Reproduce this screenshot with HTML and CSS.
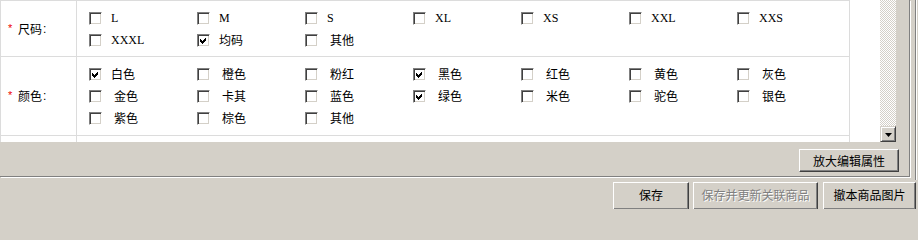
FILE: index.html
```html
<!DOCTYPE html>
<html>
<head>
<meta charset="utf-8">
<link rel="stylesheet" href="styles.css">
</head>
<body>
<div class="window">
  <div class="top">
    <div class="group">
      <div class="scroll">
        <div class="view">
          <div class="table">
            <div class="row r1">
              <div class="label"><span class="req">*</span><span class="lt">尺码</span><span class="colon">:</span></div>
              <div class="opts">
                <label class="opt lat"><span class="cb"></span><span class="tx">L</span></label>
                <label class="opt lat"><span class="cb"></span><span class="tx">M</span></label>
                <label class="opt lat"><span class="cb"></span><span class="tx">S</span></label>
                <label class="opt lat"><span class="cb"></span><span class="tx">XL</span></label>
                <label class="opt lat"><span class="cb"></span><span class="tx">XS</span></label>
                <label class="opt lat"><span class="cb"></span><span class="tx">XXL</span></label>
                <label class="opt lat"><span class="cb"></span><span class="tx">XXS</span></label>
                <label class="opt lat"><span class="cb"></span><span class="tx">XXXL</span></label>
                <label class="opt"><span class="cb on"><svg viewBox="0 0 9 9" width="9" height="9"><polygon points="1,3 3,5 7,1 7,4 3,8 1,6" fill="#000"/></svg></span><span class="tx">均码</span></label>
                <label class="opt sp"><span class="cb"></span><span class="tx">其他</span></label>
              </div>
            </div>
            <div class="row r2">
              <div class="label"><span class="req">*</span><span class="lt">颜色</span><span class="colon">:</span></div>
              <div class="opts">
                <label class="opt"><span class="cb on"><svg viewBox="0 0 9 9" width="9" height="9"><polygon points="1,3 3,5 7,1 7,4 3,8 1,6" fill="#000"/></svg></span><span class="tx">白色</span></label>
                <label class="opt sp"><span class="cb"></span><span class="tx">橙色</span></label>
                <label class="opt sp"><span class="cb"></span><span class="tx">粉红</span></label>
                <label class="opt sp"><span class="cb on"><svg viewBox="0 0 9 9" width="9" height="9"><polygon points="1,3 3,5 7,1 7,4 3,8 1,6" fill="#000"/></svg></span><span class="tx">黑色</span></label>
                <label class="opt sp"><span class="cb"></span><span class="tx">红色</span></label>
                <label class="opt sp"><span class="cb"></span><span class="tx">黄色</span></label>
                <label class="opt sp"><span class="cb"></span><span class="tx">灰色</span></label>
                <label class="opt sp"><span class="cb"></span><span class="tx">金色</span></label>
                <label class="opt sp"><span class="cb"></span><span class="tx">卡其</span></label>
                <label class="opt sp"><span class="cb"></span><span class="tx">蓝色</span></label>
                <label class="opt sp"><span class="cb on"><svg viewBox="0 0 9 9" width="9" height="9"><polygon points="1,3 3,5 7,1 7,4 3,8 1,6" fill="#000"/></svg></span><span class="tx">绿色</span></label>
                <label class="opt sp"><span class="cb"></span><span class="tx">米色</span></label>
                <label class="opt sp"><span class="cb"></span><span class="tx">驼色</span></label>
                <label class="opt sp"><span class="cb"></span><span class="tx">银色</span></label>
                <label class="opt sp"><span class="cb"></span><span class="tx">紫色</span></label>
                <label class="opt sp"><span class="cb"></span><span class="tx">棕色</span></label>
                <label class="opt sp"><span class="cb"></span><span class="tx">其他</span></label>
              </div>
            </div>
            <div class="row r3">
              <div class="label"></div>
              <div class="opts"></div>
            </div>
          </div>
        </div>
        <div class="scrollbar">
          <div class="track"></div>
          <div class="sbtn"><svg viewBox="0 0 7 4" width="7" height="4"><polygon points="0,0 7,0 3.5,4" fill="#000"/></svg></div>
        </div>
      </div>
      <div class="group-actions">
        <button class="btn zoom-btn">放大编辑属性</button>
      </div>
    </div>
    <div class="edge"></div>
  </div>
  <div class="bottom">
    <button class="btn b-save">保存</button>
    <button class="btn b-update" disabled>保存并更新关联商品</button>
    <button class="btn b-move">撤本商品图片</button>
  </div>
</div>
</body>
</html>
```

FILE: styles.css
```css
html, body {
  margin: 0;
  padding: 0;
}
body {
  background: #d4d0c8;
  width: 918px;
  height: 209px;
  overflow: hidden;
  font-family: "Noto Sans CJK SC", "Liberation Sans", sans-serif;
  font-size: 12px;
  color: #000;
}
.window {
  display: flex;
  flex-direction: column;
  width: 918px;
}
.top {
  display: flex;
  height: 180px;
}
.group {
  box-sizing: border-box;
  width: 910px;
  height: 177px;
  border-right: 1px solid #808080;
  border-bottom: 1px solid #808080;
  box-shadow: 1px 1px 0 #fff;
  display: flex;
  flex-direction: column;
}
.edge {
  margin-left: 5px;
  width: 1px;
  height: 180px;
  background: #808080;
  box-shadow: 1px 0 0 #fff;
}
.scroll {
  display: flex;
  width: 896px;
  height: 142px;
}
.view {
  width: 880px;
  height: 142px;
  background: #fff;
  overflow: hidden;
}
.table {
  box-sizing: border-box;
  width: 850px;
  border-left: 1px solid #dcdcdc;
  border-top: 1px solid #dcdcdc;
}
.row {
  display: flex;
  border-bottom: 1px solid #dcdcdc;
}
.label {
  box-sizing: border-box;
  width: 76px;
  border-right: 1px solid #dcdcdc;
  padding-left: 7px;
  display: flex;
  align-items: center;
  line-height: 16px;
}
.req {
  font-family: "Liberation Sans", sans-serif;
  color: #e00;
  font-size: 11px;
  width: 10px;
  position: relative;
  top: -1px;
}
.lt {
  letter-spacing: 0;
}
.colon {
  font-family: "Liberation Sans", sans-serif;
  margin-left: 1px;
}
.opts {
  flex: 1;
  border-right: 1px solid #dcdcdc;
  display: flex;
  flex-wrap: wrap;
  align-content: flex-start;
  padding-left: 12px;
}
.r1 .opts {
  padding-top: 6px;
  padding-bottom: 5px;
}
.r2 .opts {
  padding-top: 6px;
  padding-bottom: 6px;
}
.r3 .opts {
  height: 30px;
}
.opt {
  width: 108px;
  height: 22px;
  display: flex;
  align-items: center;
  line-height: 22px;
  white-space: nowrap;
}
.cb {
  box-sizing: border-box;
  width: 13px;
  height: 13px;
  flex: none;
  background: #fff;
  border-top: 1px solid #808080;
  border-left: 1px solid #808080;
  border-bottom: 1px solid #fff;
  border-right: 1px solid #fff;
  box-shadow: inset 1px 1px 0 #404040, inset -1px -1px 0 #d4d0c8;
  display: flex;
  align-items: center;
  justify-content: center;
}
.cb svg {
  display: block;
  shape-rendering: crispEdges;
}
.tx {
  margin-left: 9px;
}
.sp .tx {
  margin-left: 12px;
}
.lat .tx {
  font-family: "Liberation Serif", serif;
  font-size: 12px;
}
.scrollbar {
  width: 16px;
  height: 142px;
  display: flex;
  flex-direction: column;
}
.track {
  flex: 1;
  background-image: conic-gradient(#fff 25%, #d4d0c8 0 50%, #fff 0 75%, #d4d0c8 0);
  background-size: 2px 2px;
}
.sbtn {
  box-sizing: border-box;
  width: 16px;
  height: 16px;
  background: #d4d0c8;
  border-top: 1px solid #d4d0c8;
  border-left: 1px solid #d4d0c8;
  border-right: 1px solid #404040;
  border-bottom: 1px solid #404040;
  box-shadow: inset 1px 1px 0 #fff, inset -1px -1px 0 #808080;
  display: flex;
  align-items: center;
  justify-content: center;
}
.sbtn svg {
  display: block;
  margin-top: 1px;
}
.group-actions {
  display: flex;
  justify-content: flex-end;
  padding-right: 10px;
  margin-top: 7px;
}
.btn {
  box-sizing: border-box;
  font-family: "Noto Sans CJK SC", "Liberation Sans", sans-serif;
  font-size: 12px;
  color: #000;
  background: #d4d0c8;
  border-top: 1px solid #fff;
  border-left: 1px solid #fff;
  border-right: 1px solid #404040;
  border-bottom: 1px solid #404040;
  box-shadow: inset -1px -1px 0 #808080;
  padding: 0;
  margin: 0;
  text-align: center;
  border-radius: 0;
}
.zoom-btn {
  width: 100px;
  height: 23px;
  line-height: 20px;
}
.bottom {
  display: flex;
  justify-content: flex-end;
  margin-top: 2px;
  padding-right: 2px;
}
.bottom .btn {
  height: 28px;
  line-height: 24px;
  padding-bottom: 2px;
}
.b-save {
  width: 76px;
}
.b-update {
  width: 125px;
  margin-left: 4px;
  color: #808080;
  text-shadow: 1px 1px 0 #fff;
}
.b-move {
  width: 93px;
  margin-left: 5px;
}
```
